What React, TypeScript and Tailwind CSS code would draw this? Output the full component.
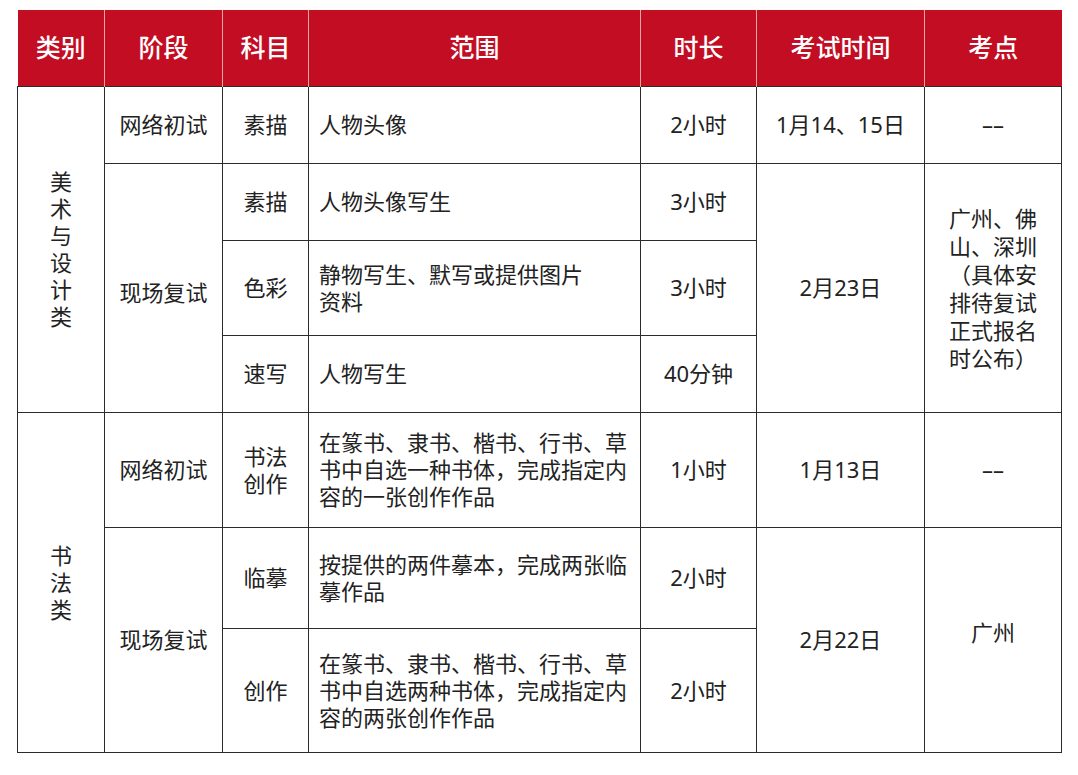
const th =
  "border-x border-[#e9a3ab] bg-[#c30d23] text-white text-[25px] font-medium text-center align-middle";
const td = "border border-[#2b2b2b] text-center align-middle text-[22px] leading-[27px]";
const tdLeft = "border border-[#2b2b2b] text-left align-middle text-[22px] leading-[27px] px-[10px]";

// one character per line, for the tall 类别 cells
const Stack = ({ text }: { text: string }) => (
  <div className="mx-auto w-[22px] leading-[27px]">
    {text.split("").map((c, i) => (
      <div key={i} className="h-[27px]">
        {c}
      </div>
    ))}
  </div>
);

export default function App() {
  return (
    <div
      className="min-h-screen bg-white pl-[17px] pt-[10px] text-[#222]"
      style={{ fontFamily: '"Noto Sans", "Noto Sans CJK SC", sans-serif' }}
    >
      <table className="w-[1044px] table-fixed border-collapse border-b border-[#2b2b2b]">
        <colgroup>
          <col className="w-[87px]" />
          <col className="w-[118px]" />
          <col className="w-[86px]" />
          <col className="w-[332px]" />
          <col className="w-[116px]" />
          <col className="w-[168px]" />
          <col className="w-[137px]" />
        </colgroup>
        <thead>
          <tr className="h-[76px]">
            <th className={th + " border-l-0"}>类别</th>
            <th className={th}>阶段</th>
            <th className={th}>科目</th>
            <th className={th}>范围</th>
            <th className={th}>时长</th>
            <th className={th}>考试时间</th>
            <th className={th + " border-r-0"}>考点</th>
          </tr>
        </thead>
        <tbody>
          <tr className="h-[77px]">
            <td className={td} rowSpan={4}>
              <Stack text="美术与设计类" />
            </td>
            <td className={td}>网络初试</td>
            <td className={td}>素描</td>
            <td className={tdLeft}>人物头像</td>
            <td className={td}>2小时</td>
            <td className={td}>1月14、15日</td>
            <td className={td}>––</td>
          </tr>
          <tr className="h-[77px]">
            <td className={td} rowSpan={3}>
              <div className="pt-[10px]">现场复试</div>
            </td>
            <td className={td}>素描</td>
            <td className={tdLeft}>人物头像写生</td>
            <td className={td}>3小时</td>
            <td className={td} rowSpan={3}>
              2月23日
            </td>
            <td className={td} rowSpan={3}>
              <div className="leading-[28px]">
                广州、佛
                <br />
                山、深圳
                <br />
                （具体安
                <br />
                排待复试
                <br />
                正式报名
                <br />
                时公布）
              </div>
            </td>
          </tr>
          <tr className="h-[95px]">
            <td className={td}>色彩</td>
            <td className={tdLeft}>
              静物写生、默写或提供图片
              <br />
              资料
            </td>
            <td className={td}>3小时</td>
          </tr>
          <tr className="h-[77px]">
            <td className={td}>速写</td>
            <td className={tdLeft}>人物写生</td>
            <td className={td}>40分钟</td>
          </tr>
          <tr className="h-[115px]">
            <td className={td} rowSpan={3}>
              <Stack text="书法类" />
            </td>
            <td className={td}>网络初试</td>
            <td className={td}>
              书法
              <br />
              创作
            </td>
            <td className={tdLeft}>在篆书、隶书、楷书、行书、草书中自选一种书体，完成指定内容的一张创作作品</td>
            <td className={td}>1小时</td>
            <td className={td}>1月13日</td>
            <td className={td}>––</td>
          </tr>
          <tr className="h-[101px]">
            <td className={td} rowSpan={2}>
              现场复试
            </td>
            <td className={td}>临摹</td>
            <td className={tdLeft}>按提供的两件摹本，完成两张临摹作品</td>
            <td className={td}>2小时</td>
            <td className={td} rowSpan={2}>
              2月22日
            </td>
            <td className={td} rowSpan={2}>
              <div className="pb-[14px]">广州</div>
            </td>
          </tr>
          <tr className="h-[124px]">
            <td className={td}>创作</td>
            <td className={tdLeft}>在篆书、隶书、楷书、行书、草书中自选两种书体，完成指定内容的两张创作作品</td>
            <td className={td}>2小时</td>
          </tr>
        </tbody>
      </table>
    </div>
  );
}
